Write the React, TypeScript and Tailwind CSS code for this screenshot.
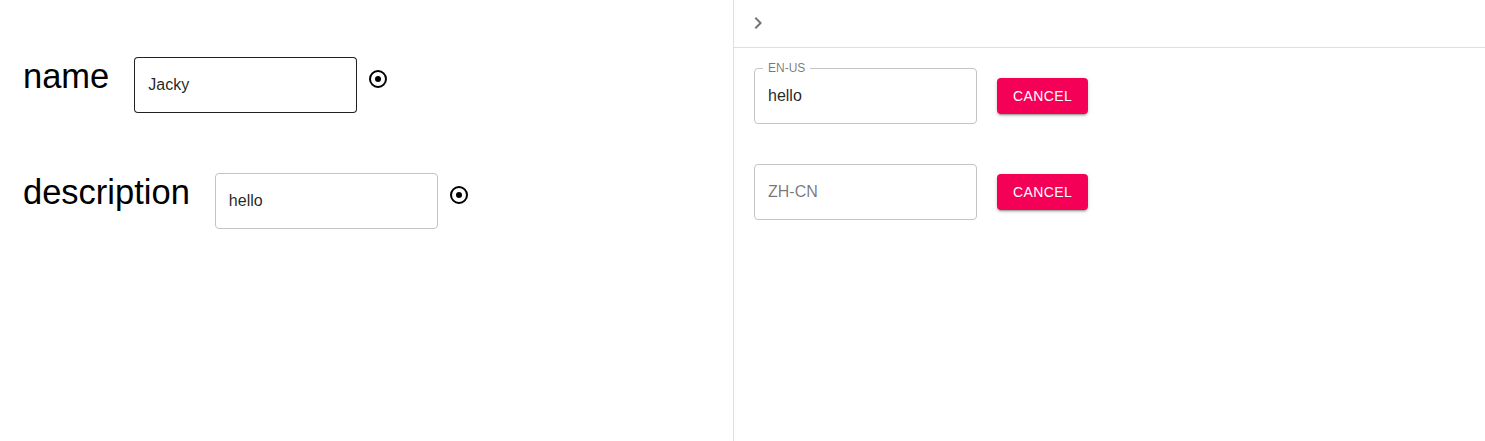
import React from "react";

const FIELDS = [
  { key: "name", label: "name", value: "Jacky", hovered: true },
  { key: "description", label: "description", value: "hello", hovered: false },
];

const LOCALES = [
  { key: "en-US", label: "EN-US", value: "hello" },
  { key: "zh-CN", label: "ZH-CN", value: "" },
];

function RadioIcon() {
  return (
    <svg width="24" height="24" viewBox="0 0 24 24" className="shrink-0">
      <circle cx="12" cy="12" r="8" fill="none" stroke="#000" strokeWidth="2" />
      <circle cx="12" cy="12" r="3" fill="#000" />
    </svg>
  );
}

function ChevronRight() {
  return (
    <svg width="24" height="24" viewBox="0 0 24 24" fill="#757575">
      <path d="M10 6 8.59 7.41 13.17 12l-4.58 4.59L10 18l6-6z" />
    </svg>
  );
}

export default function App() {
  return (
    <div className="flex h-screen w-full bg-white font-['Liberation_Sans',Arial,sans-serif]">
      {/* Editor side */}
      <div className="w-[734px] shrink-0 border-r border-[#e0e0e0] pl-[23px] pt-[57px] flex flex-col gap-[60px]">
        {FIELDS.map((f) => (
          <div key={f.key} className="flex items-start">
            <span className="text-[34.5px] leading-[1.149] text-black mr-[25px]">
              {f.label}
            </span>
            <input
              defaultValue={f.value}
              className={`w-[223px] h-[56px] rounded-[4px] border px-[13px] text-[16px] text-[rgba(0,0,0,0.87)] outline-none bg-white ${
                f.hovered ? "border-[rgba(0,0,0,0.87)]" : "border-[#c4c4c4]"
              }`}
            />
            <div className="ml-[9px] mt-[10px]">
              <RadioIcon />
            </div>
          </div>
        ))}
      </div>

      {/* Translation drawer */}
      <div className="flex-1 flex flex-col">
        <div className="h-[48px] border-b border-[#e0e0e0] flex items-center pl-[12px] pb-[2px]">
          <ChevronRight />
        </div>
        <div className="pl-[20px] pt-[20px] flex flex-col gap-[40px]">
          {LOCALES.map((l) => (
            <div key={l.key} className="flex items-center gap-[20px]">
              <div className="relative w-[223px] h-[56px]">
                {l.value ? (
                  <>
                    <input
                      defaultValue={l.value}
                      className="w-full h-full rounded-[4px] border border-[#c4c4c4] px-[13px] text-[16px] text-[rgba(0,0,0,0.87)] outline-none bg-white"
                    />
                    <span className="absolute left-[9px] top-[-7px] bg-white px-[5px] text-[12px] leading-[14px] text-[rgba(0,0,0,0.54)]">
                      {l.label}
                    </span>
                  </>
                ) : (
                  <input
                    placeholder={l.label}
                    className="w-full h-full rounded-[4px] border border-[#c4c4c4] px-[13px] text-[16px] text-[rgba(0,0,0,0.87)] placeholder:text-[rgba(0,0,0,0.54)] placeholder:opacity-100 outline-none bg-white"
                  />
                )}
              </div>
              <button className="h-[36px] w-[91px] rounded-[4px] bg-[#f50057] text-white text-[14px] font-normal tracking-[0.02857em] uppercase shadow-[0px_3px_1px_-2px_rgba(0,0,0,0.2),0px_2px_2px_0px_rgba(0,0,0,0.14),0px_1px_5px_0px_rgba(0,0,0,0.12)]">
                Cancel
              </button>
            </div>
          ))}
        </div>
      </div>
    </div>
  );
}
